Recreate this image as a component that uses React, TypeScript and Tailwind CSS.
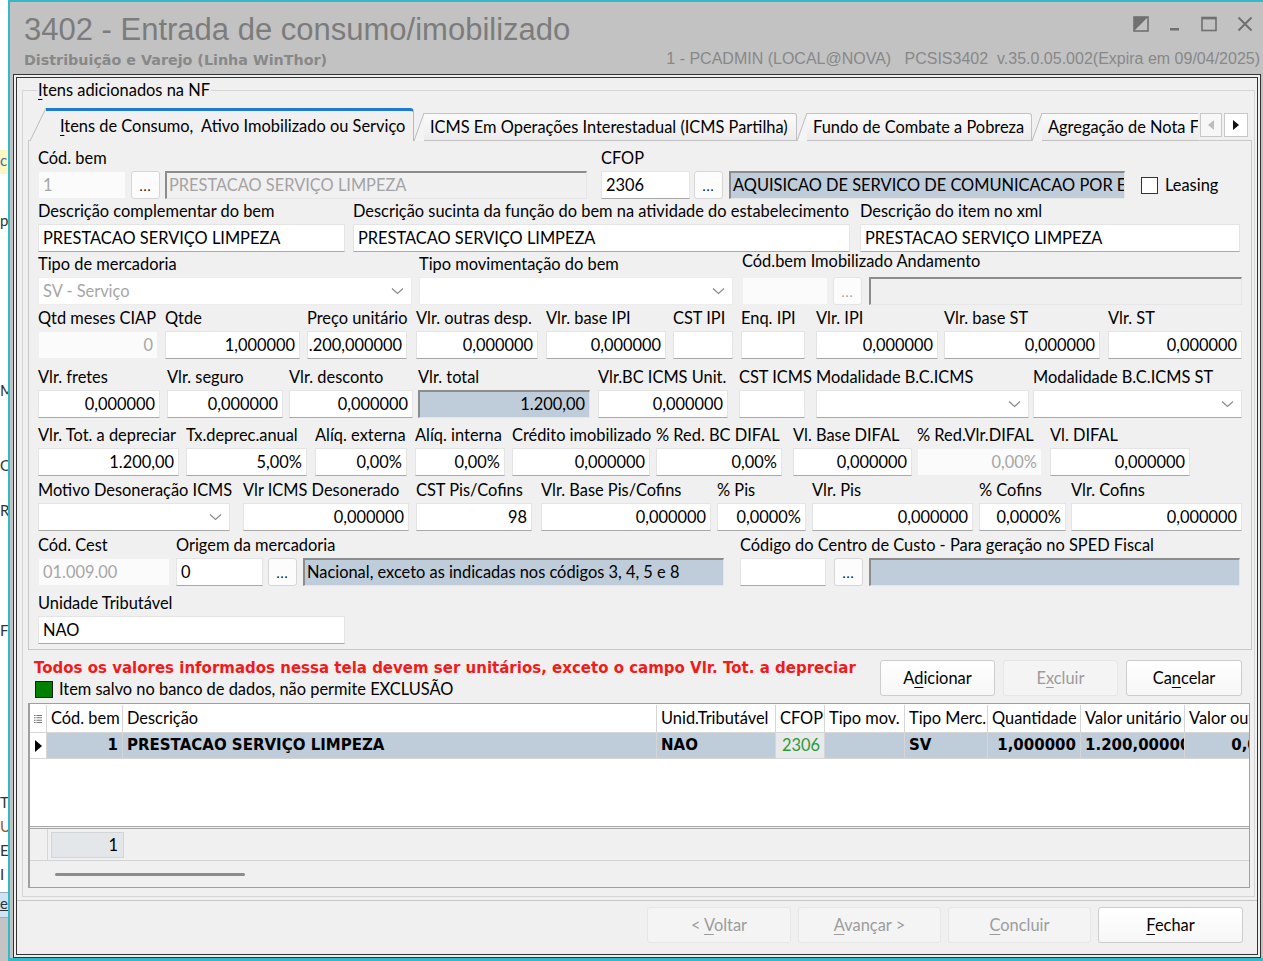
import React from 'react';

type Kids = { children?: React.ReactNode };

const Lbl = ({ children, cls = '' }: Kids & { cls?: string }) => (
  <div className={'h-[20px] leading-[20px] whitespace-nowrap text-black ' + cls}>{children}</div>
);

type BoxProps = { value?: string; right?: boolean; muted?: boolean; flat?: boolean; cls?: string };

const Box = ({ value = '', right, muted, flat, cls = '' }: BoxProps) => (
  <div
    className={
      'h-[28px] flex items-center px-[4px] whitespace-nowrap overflow-hidden ' +
      (flat ? 'bg-[#fbfbfb] border border-[#f0f0f0] ' : 'bg-white border border-[#e4e4e4] border-b-[#a8a8a8] ') +
      (right ? 'justify-end ' : '') +
      (muted ? 'text-[#a6a6a6] ' : 'text-black ') +
      cls
    }
  >
    {value}
  </div>
);

const Inset = ({ value = '', blue, cls = '' }: { value?: string; blue?: boolean; cls?: string }) => (
  <div
    className={
      'h-[28px] border-t-2 border-l-2 border-t-[#8c8c8c] border-l-[#8c8c8c] border-b border-r border-b-[#e6e6e6] border-r-[#e6e6e6] flex items-center px-[2px] whitespace-nowrap overflow-hidden ' +
      (blue ? 'bg-[#bfccd9] text-black ' : 'bg-[#f0f0f0] text-[#a3a3a3] ') +
      cls
    }
  >
    {value}
  </div>
);

const Dots = ({ cls = '' }: { cls?: string }) => (
  <div
    className={
      'h-[28px] w-[29px] shrink-0 rounded-[3px] border border-[#d6d6d6] bg-[#fcfcfc] flex items-end justify-center pb-[5px] text-[13px] leading-none tracking-[1px] ' +
      cls
    }
  >
    ...
  </div>
);

const Chevron = () => (
  <svg width="13" height="8" viewBox="0 0 13 8">
    <path d="M1 1.5 6.5 6.5 12 1.5" fill="none" stroke="#8a8a8a" strokeWidth="1.2" />
  </svg>
);

const Sel = ({ value = '', muted, cls = '' }: { value?: string; muted?: boolean; cls?: string }) => (
  <div
    className={
      'h-[28px] flex items-center pl-[4px] pr-[7px] ' +
      (muted ? 'bg-white border border-[#ececec] ' : 'bg-white border border-[#e4e4e4] border-b-[#a8a8a8] ') +
      cls
    }
  >
    <span className={'flex-1 whitespace-nowrap ' + (muted ? 'text-[#a6a6a6]' : 'text-black')}>{value}</span>
    <Chevron />
  </div>
);

const Fld = ({ label, cls = '', children }: Kids & { label?: string; cls?: string }) => (
  <div className={'flex flex-col shrink-0 ' + cls}>
    <Lbl>{label}</Lbl>
    <div className="mt-[3px] flex">{children}</div>
  </div>
);

const U = ({ children }: Kids) => <span className="underline underline-offset-[3px]">{children}</span>;

const Btn = ({ children, off, cls = '' }: Kids & { off?: boolean; cls?: string }) => (
  <div
    className={
      'h-[36px] shrink-0 rounded-[3px] flex items-center justify-center ' +
      (off
        ? 'bg-[#f4f4f4] border border-[#e6e6e6] text-[#9c9c9c] '
        : 'bg-gradient-to-b from-white to-[#f7f7f7] border border-[#cdcdcd] text-black ') +
      cls
    }
  >
    <span className="whitespace-pre">{children}</span>
  </div>
);

const TabSlant = ({ w, h, active }: { w: number; h: number; active?: boolean }) => (
  <svg width={w} height={h} viewBox={`0 0 ${w} ${h}`} className="shrink-0 block">
    <polygon points={`0,${h} ${w},0 ${w},${h}`} fill={active ? '#f0f0f0' : '#f4f4f4'} />
    <line x1="0" y1={h} x2={w} y2="0" stroke="#bcbcbc" strokeWidth="1" />
  </svg>
);

const Tab = ({ children, cls = '', last }: Kids & { cls?: string; last?: boolean }) => (
  <div className={'flex items-end shrink-0 overflow-hidden ' + cls}>
    <TabSlant w={10} h={28} />
    <div
      className={
        'h-[28px] flex-1 flex items-center pl-[6px] whitespace-nowrap bg-gradient-to-b from-[#fbfbfb] to-[#ececec] border-t border-b border-[#c2c2c2] ' +
        (last ? '' : 'border-r rounded-tr-[3px]')
      }
    >
      {children}
    </div>
  </div>
);

const Cell = ({ children, cls = '' }: Kids & { cls?: string }) => (
  <div className={'h-full shrink-0 flex items-center px-[4px] border-r border-[#d6d6d6] whitespace-nowrap overflow-hidden ' + cls}>
    {children}
  </div>
);

const GridIcon = () => (
  <svg width="10" height="12" viewBox="0 0 10 12">
    <rect x="0" y="1" width="2" height="1" fill="#555" />
    <rect x="3" y="1" width="7" height="1" fill="#555" />
    <rect x="0" y="4" width="2" height="1" fill="#555" />
    <rect x="3" y="4" width="7" height="1" fill="#555" />
    <rect x="0" y="7" width="2" height="1" fill="#555" />
    <rect x="3" y="7" width="7" height="1" fill="#555" />
    <rect x="0" y="10" width="2" height="1" fill="#555" />
    <rect x="3" y="10" width="7" height="1" fill="#555" />
  </svg>
);

const WinIcons = () => (
  <div className="flex items-center gap-[20px] pt-[14px] pr-[10px]">
    <svg width="16" height="16" viewBox="0 0 16 16">
      <rect x="1" y="1" width="14" height="14" fill="none" stroke="#707070" strokeWidth="1.6" />
      <polygon points="1,15 15,1 1,1" fill="#707070" />
    </svg>
    <svg width="12" height="16" viewBox="0 0 12 16">
      <rect x="1" y="12" width="9" height="2.5" fill="#707070" />
    </svg>
    <svg width="16" height="16" viewBox="0 0 16 16">
      <rect x="1" y="1.5" width="14" height="13" fill="none" stroke="#707070" strokeWidth="1.6" />
      <rect x="1" y="1" width="14" height="2.4" fill="#707070" />
    </svg>
    <svg width="16" height="16" viewBox="0 0 16 16">
      <path d="M1.5 1.5 14.5 14.5 M14.5 1.5 1.5 14.5" stroke="#707070" strokeWidth="2" />
    </svg>
  </div>
);

const BOLD = "font-['DejaVu_Sans',sans-serif] font-bold text-[15px]";

export default function App() {
  return (
    <div className="w-[1263px] h-[961px] flex bg-white overflow-hidden font-['Lato',sans-serif] text-[16.4px] text-black">
      {/* pedaço da janela de fundo */}
      <div className="w-[8px] shrink-0 flex flex-col overflow-hidden text-[15px] leading-[20px] text-[#333]">
        <div className="h-[150px] bg-white" />
        <div className="h-[24px] bg-[#fdf6c3] text-[#4a6a9a]">c</div>
        <div className="h-[36px]" />
        <div>p</div>
        <div className="h-[150px]" />
        <div>M/</div>
        <div className="h-[55px]" />
        <div>O</div>
        <div className="h-[25px]" />
        <div>R</div>
        <div className="h-[100px]" />
        <div>F</div>
        <div className="h-[150px]" />
        <div className="leading-[24px]">T</div>
        <div className="leading-[24px] text-[#a05a20]">U</div>
        <div className="leading-[24px]">E</div>
        <div className="leading-[24px]">I</div>
        <div className="h-[6px]" />
        <div className="h-[26px] bg-[#cfe3f7] border-y border-[#9ab] underline">en</div>
        <div className="flex-1 bg-[#c4c4c4]" />
      </div>

      {/* janela */}
      <div className="flex-1 flex flex-col bg-[#c2c2c2] border-l-2 border-t-2 border-b-[3px] border-[#35b9c7]">
        {/* barra de título */}
        <div className="h-[72px] shrink-0 flex justify-between">
          <div className="pl-[14px] pt-[11px]">
            <div className="font-['Liberation_Sans',sans-serif] text-[31px] leading-[34px] text-[#7c7c7c] whitespace-nowrap">
              3402 - Entrada de consumo/imobilizado
            </div>
            <div className="font-['DejaVu_Sans',sans-serif] text-[14.3px] leading-[20px] font-bold text-[#888888] mt-[3px] whitespace-nowrap">
              Distribuição e Varejo (Linha WinThor)
            </div>
          </div>
          <div className="flex flex-col items-end">
            <WinIcons />
            <div className="font-['Liberation_Sans',sans-serif] text-[16px] leading-[20px] text-[#888888] pr-[3px] mt-[17px] whitespace-pre">
              1 - PCADMIN (LOCAL@NOVA)   PCSIS3402  v.35.0.05.002(Expira em 09/04/2025)
            </div>
          </div>
        </div>

        {/* formulário */}
        <div className="flex-1 ml-[3px] mr-[2px] border-[4px] border-double border-[#333] bg-[#f0f0f0] flex flex-col">
          <fieldset className="ml-[5px] mr-[2px] mt-[2px] border border-[#d6d6d6] flex flex-col h-[817px] shrink-0">
            <legend className="ml-[14px] px-[1px] leading-[20px] -mb-[2px]">
              <U>I</U>tens adicionados na NF
            </legend>

            {/* abas */}
            <div className="ml-[7px] mt-[10px] flex items-end h-[33px] relative z-10">
              <div className="flex items-end shrink-0 w-[384px]">
                <TabSlant w={16} h={33} active />
                <div className="h-[33px] flex-1 bg-[#f0f0f0] border-t-[3px] border-[#1c7ad4] rounded-tr-[4px] border-r border-r-[#b9b9b9] flex items-center pl-[14px] whitespace-pre">
                  <span>
                    <U>I</U>tens de Consumo,  Ativo Imobilizado ou Serviço
                  </span>
                </div>
              </div>
              <Tab cls="w-[383px]">ICMS Em Operações Interestadual (ICMS Partilha)</Tab>
              <Tab cls="w-[235px]">Fundo de Combate a Pobreza</Tab>
              <Tab cls="w-[166px]" last>
                Agregação de Nota Fiscal
              </Tab>
              <div className="flex ml-[2px] mb-[4px] gap-[2px]">
                <div className="w-[22px] h-[24px] border border-[#c8c8c8] bg-[#f7f7f7] flex items-center justify-center">
                  <svg width="6" height="10" viewBox="0 0 6 10">
                    <polygon points="6,0 0,5 6,10" fill="#bdbdbd" />
                  </svg>
                </div>
                <div className="w-[24px] h-[24px] border border-[#c8c8c8] bg-white flex items-center justify-center">
                  <svg width="6" height="10" viewBox="0 0 6 10">
                    <polygon points="0,0 6,5 0,10" fill="#111" />
                  </svg>
                </div>
              </div>
            </div>

            {/* painel da aba */}
            <div className="ml-[5px] w-[1224px] h-[510px] -mt-[1px] border border-[#c9c9c9] bg-[#f0f0f0] pl-[9px] pt-[7px] flex flex-col">
              {/* linha 1 */}
              <div className="flex">
                <Fld label="Cód. bem" cls="w-[549px]">
                  <Box value="1" muted flat cls="w-[88px]" />
                  <Dots cls="ml-[5px]" />
                  <Inset value="PRESTACAO SERVIÇO LIMPEZA" cls="ml-[5px] w-[422px]" />
                </Fld>
                <Fld label="CFOP" cls="ml-[14px]">
                  <Box value="2306" cls="w-[89px]" />
                  <Dots cls="ml-[4px]" />
                  <Inset value="AQUISICAO DE SERVICO DE COMUNICACAO POR EST" blue cls="ml-[6px] w-[396px]" />
                </Fld>
                <Fld cls="ml-[16px]">
                  <div className="h-[28px] flex items-center">
                    <div className="w-[17px] h-[17px] border border-[#333] bg-white" />
                    <span className="ml-[7px]">Leasing</span>
                  </div>
                </Fld>
              </div>

              {/* linha 2 */}
              <div className="flex mt-[2px]">
                <Fld label="Descrição complementar do bem" cls="w-[307px]">
                  <Box value="PRESTACAO SERVIÇO LIMPEZA" cls="w-full" />
                </Fld>
                <Fld label="Descrição sucinta da função do bem na atividade do estabelecimento" cls="ml-[8px] w-[497px]">
                  <Box value="PRESTACAO SERVIÇO LIMPEZA" cls="w-full" />
                </Fld>
                <Fld label="Descrição do item no xml" cls="ml-[10px] w-[380px]">
                  <Box value="PRESTACAO SERVIÇO LIMPEZA" cls="w-full" />
                </Fld>
              </div>

              {/* linha 3 */}
              <div className="flex mt-[2px]">
                <Fld label="Tipo de mercadoria" cls="w-[374px]">
                  <Sel value="SV - Serviço" muted cls="w-full" />
                </Fld>
                <Fld label="Tipo movimentação do bem" cls="ml-[7px] w-[314px]">
                  <Sel muted cls="w-full" />
                </Fld>
                <Fld label="Cód.bem Imobilizado Andamento" cls="ml-[9px] -mt-[3px]">
                  <div className="flex mt-[3px]">
                    <Box flat cls="w-[86px]" />
                    <Dots cls="ml-[5px] text-[#9a9a9a] border-[#e4e4e4]" />
                    <Inset cls="ml-[7px] w-[373px]" />
                  </div>
                </Fld>
              </div>

              {/* linha 4 */}
              <div className="flex mt-[3px]">
                <Fld label="Qtd meses CIAP" cls="w-[120px]">
                  <Box value="0" right muted flat cls="w-full" />
                </Fld>
                <Fld label="Qtde" cls="ml-[7px] w-[135px]">
                  <Box value="1,000000" right cls="w-full" />
                </Fld>
                <Fld label="Preço unitário" cls="ml-[7px] w-[100px]">
                  <Box value=".200,000000" right cls="w-full" />
                </Fld>
                <Fld label="Vlr. outras desp." cls="ml-[9px] w-[122px]">
                  <Box value="0,000000" right cls="w-full" />
                </Fld>
                <Fld label="Vlr. base IPI" cls="ml-[8px] w-[120px]">
                  <Box value="0,000000" right cls="w-full" />
                </Fld>
                <Fld label="CST IPI" cls="ml-[7px] w-[60px]">
                  <Box cls="w-full" />
                </Fld>
                <Fld label="Enq. IPI" cls="ml-[8px] w-[64px]">
                  <Box cls="w-full" />
                </Fld>
                <Fld label="Vlr. IPI" cls="ml-[11px] w-[122px]">
                  <Box value="0,000000" right cls="w-full" />
                </Fld>
                <Fld label="Vlr. base ST" cls="ml-[6px] w-[156px]">
                  <Box value="0,000000" right cls="w-full" />
                </Fld>
                <Fld label="Vlr. ST" cls="ml-[8px] w-[134px]">
                  <Box value="0,000000" right cls="w-full" />
                </Fld>
              </div>

              {/* linha 5 */}
              <div className="flex mt-[8px]">
                <Fld label="Vlr. fretes" cls="w-[122px]">
                  <Box value="0,000000" right cls="w-full" />
                </Fld>
                <Fld label="Vlr. seguro" cls="ml-[7px] w-[116px]">
                  <Box value="0,000000" right cls="w-full" />
                </Fld>
                <Fld label="Vlr. desconto" cls="ml-[6px] w-[124px]">
                  <Box value="0,000000" right cls="w-full" />
                </Fld>
                <Fld label="Vlr. total" cls="ml-[5px] w-[172px]">
                  <Inset value="1.200,00" blue cls="w-full justify-end pr-[4px]" />
                </Fld>
                <Fld label="Vlr.BC ICMS Unit." cls="ml-[8px] w-[130px]">
                  <Box value="0,000000" right cls="w-full" />
                </Fld>
                <Fld label="CST ICMS" cls="ml-[11px] w-[66px]">
                  <Box cls="w-full" />
                </Fld>
                <Fld label="Modalidade B.C.ICMS" cls="ml-[11px] w-[213px]">
                  <Sel cls="w-full" />
                </Fld>
                <Fld label="Modalidade B.C.ICMS ST" cls="ml-[4px] w-[209px]">
                  <Sel cls="w-full" />
                </Fld>
              </div>

              {/* linha 6 */}
              <div className="flex mt-[7px]">
                <Fld label="Vlr. Tot. a depreciar" cls="w-[141px]">
                  <Box value="1.200,00" right cls="w-full" />
                </Fld>
                <Fld label="Tx.deprec.anual" cls="ml-[7px] w-[121px]">
                  <Box value="5,00%" right cls="w-full" />
                </Fld>
                <Fld label="Alíq. externa" cls="ml-[8px] w-[92px]">
                  <Box value="0,00%" right cls="w-full" />
                </Fld>
                <Fld label="Alíq. interna" cls="ml-[8px] w-[90px]">
                  <Box value="0,00%" right cls="w-full" />
                </Fld>
                <Fld label="Crédito imobilizado" cls="ml-[7px] w-[138px]">
                  <Box value="0,000000" right cls="w-full" />
                </Fld>
                <Fld label="% Red. BC DIFAL" cls="ml-[6px] w-[126px]">
                  <Box value="0,00%" right cls="w-full" />
                </Fld>
                <Fld label="Vl. Base DIFAL" cls="ml-[11px] w-[119px]">
                  <Box value="0,000000" right cls="w-full" />
                </Fld>
                <Fld label="% Red.Vlr.DIFAL" cls="ml-[5px] w-[125px]">
                  <Box value="0,00%" right muted flat cls="w-full" />
                </Fld>
                <Fld label="Vl. DIFAL" cls="ml-[8px] w-[140px]">
                  <Box value="0,000000" right cls="w-full" />
                </Fld>
              </div>

              {/* linha 7 */}
              <div className="flex mt-[4px]">
                <Fld label="Motivo Desoneração ICMS" cls="w-[192px]">
                  <Sel cls="w-full" />
                </Fld>
                <Fld label="Vlr ICMS Desonerado" cls="ml-[13px] w-[166px]">
                  <Box value="0,000000" right cls="w-full" />
                </Fld>
                <Fld label="CST Pis/Cofins" cls="ml-[7px] w-[116px]">
                  <Box value="98" right cls="w-full" />
                </Fld>
                <Fld label="Vlr. Base Pis/Cofins" cls="ml-[9px] w-[170px]">
                  <Box value="0,000000" right cls="w-full" />
                </Fld>
                <Fld label="% Pis" cls="ml-[6px] w-[89px]">
                  <Box value="0,0000%" right cls="w-full" />
                </Fld>
                <Fld label="Vlr. Pis" cls="ml-[6px] w-[161px]">
                  <Box value="0,000000" right cls="w-full" />
                </Fld>
                <Fld label="% Cofins" cls="ml-[6px] w-[87px]">
                  <Box value="0,0000%" right cls="w-full" />
                </Fld>
                <Fld label="Vlr. Cofins" cls="ml-[5px] w-[171px]">
                  <Box value="0,000000" right cls="w-full" />
                </Fld>
              </div>

              {/* linha 8 */}
              <div className="flex mt-[4px]">
                <Fld label="Cód. Cest" cls="w-[132px]">
                  <Box value="01.009.00" muted flat cls="w-full" />
                </Fld>
                <Fld label="Origem da mercadoria" cls="ml-[6px]">
                  <Box value="0" cls="w-[87px]" />
                  <Dots cls="ml-[5px]" />
                  <Inset value="Nacional, exceto as indicadas nos códigos 3, 4, 5 e 8" blue cls="ml-[6px] w-[421px]" />
                </Fld>
                <Fld label="Código do Centro de Custo - Para geração no SPED Fiscal" cls="ml-[16px]">
                  <Box cls="w-[86px]" />
                  <Dots cls="ml-[8px]" />
                  <Inset blue cls="ml-[6px] w-[371px]" />
                </Fld>
              </div>

              {/* linha 9 */}
              <div className="flex mt-[7px]">
                <Fld label="Unidade Tributável" cls="w-[307px]">
                  <Box value="NAO" cls="w-full" />
                </Fld>
              </div>
            </div>

            {/* avisos e botões */}
            <div className="h-[53px] flex items-start">
              <div className="ml-[11px] pt-[7px] flex flex-col">
                <div className={BOLD + ' text-[#f21b1b] leading-[22px] whitespace-nowrap'}>
                  Todos os valores informados nessa tela devem ser unitários, exceto o campo Vlr. Tot. a depreciar
                </div>
                <div className="flex items-center leading-[20px]">
                  <div className="w-[18px] h-[17px] bg-[#008000] border border-[#1c1c1c] ml-[1px]" />
                  <span className="ml-[6px]">Item salvo no banco de dados, não permite EXCLUSÃO</span>
                </div>
              </div>
              <div className="flex ml-auto mr-[12px] mt-[10px] gap-[8px]">
                <Btn cls="w-[115px]">
                  A<U>d</U>icionar
                </Btn>
                <Btn off cls="w-[115px]">
                  E<U>x</U>cluir
                </Btn>
                <Btn cls="w-[116px]">
                  Ca<U>n</U>celar
                </Btn>
              </div>
            </div>

            {/* grade */}
            <div className="ml-[5px] w-[1222px] h-[185px] border border-[#a0a0a0] border-l-[2px] flex flex-col overflow-hidden bg-white">
              <div className="h-[29px] shrink-0 flex border-b border-[#d6d6d6] pt-[1px]">
                <Cell cls="w-[17px] justify-center px-0">
                  <GridIcon />
                </Cell>
                <Cell cls="w-[76px]">Cód. bem</Cell>
                <Cell cls="w-[534px]">Descrição</Cell>
                <Cell cls="w-[119px]">Unid.Tributável</Cell>
                <Cell cls="w-[49px]">CFOP</Cell>
                <Cell cls="w-[80px]">Tipo mov.</Cell>
                <Cell cls="w-[83px]">Tipo Merc.</Cell>
                <Cell cls="w-[93px]">Quantidade</Cell>
                <Cell cls="w-[104px]">Valor unitário</Cell>
                <Cell cls="w-[130px]">Valor outras desp.</Cell>
              </div>
              <div className={'h-[26px] shrink-0 flex border-b border-[#d6d6d6] bg-[#bfccda] ' + BOLD}>
                <div className="w-[17px] shrink-0 bg-white border-r border-[#d6d6d6] flex items-center justify-center">
                  <svg width="7" height="12" viewBox="0 0 7 12">
                    <polygon points="0,0 7,6 0,12" fill="#000" />
                  </svg>
                </div>
                <Cell cls="w-[76px] justify-end">1</Cell>
                <Cell cls="w-[534px]">PRESTACAO SERVIÇO LIMPEZA</Cell>
                <Cell cls="w-[119px]">NAO</Cell>
                <Cell cls="w-[49px] bg-[#e7e9eb] font-['Lato',sans-serif] font-normal text-[16.4px] text-[#2e9a34] justify-end">2306</Cell>
                <Cell cls="w-[80px]" />
                <Cell cls="w-[83px]">SV</Cell>
                <Cell cls="w-[93px] justify-end px-[2px]">1,000000</Cell>
                <Cell cls="w-[104px] px-[2px]">1.200,000000</Cell>
                <Cell cls="w-[130px] justify-end">0,000000</Cell>
              </div>
              <div className="flex-1 bg-white" />
              <div className="h-[34px] shrink-0 flex border-t-[3px] border-double border-[#a8a8a8] bg-[#f0f0f0]">
                <div className="w-[18px] border-r border-[#d6d6d6]" />
                <div className="ml-[3px] mt-[3px] w-[73px] h-[26px] bg-[#e4e7e9] border border-[#d3d6d8] flex items-center justify-end pr-[5px]">
                  1
                </div>
              </div>
              <div className="h-[27px] shrink-0 border-t border-[#d3d3d3] bg-[#f0f0f0] flex items-center">
                <div className="ml-[25px] w-[190px] h-[3px] bg-[#8c8c8c] rounded-full" />
              </div>
            </div>
          </fieldset>

          {/* botões do assistente */}
          <div className="flex-1 mt-[3px] border-t border-[#c8c8c8] flex items-start justify-end pr-[14px] pt-[6px] gap-[7px]">
            <Btn off cls="w-[144px]">
              &lt; <U>V</U>oltar
            </Btn>
            <Btn off cls="w-[143px]">
              <U>A</U>vançar &gt;
            </Btn>
            <Btn off cls="w-[143px]">
              <U>C</U>oncluir
            </Btn>
            <Btn cls="w-[145px]">
              <U>F</U>echar
            </Btn>
          </div>
        </div>
      </div>
    </div>
  );
}
